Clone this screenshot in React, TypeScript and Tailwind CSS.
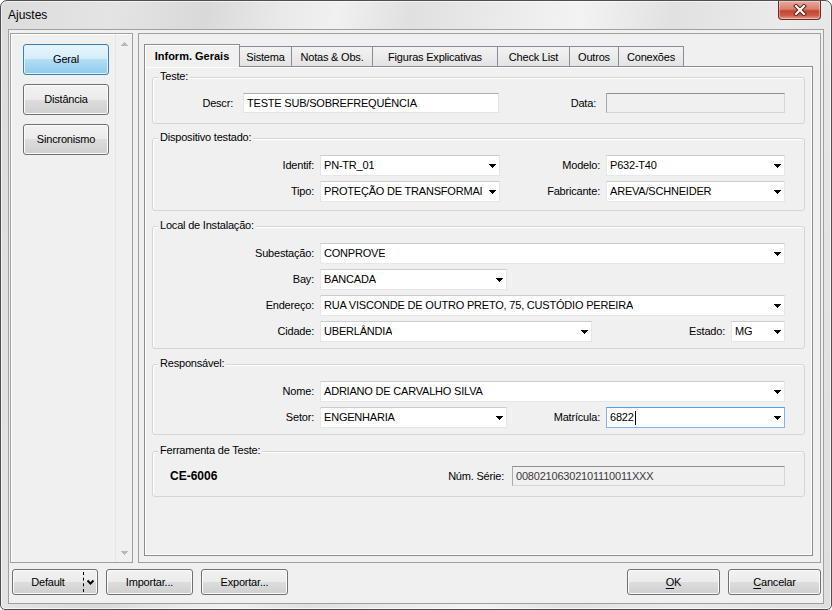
import React from "react";

function Arrow({ color = "#000" }: { color?: string }) {
  return (
    <svg width="7" height="4" viewBox="0 0 7 4" shapeRendering="crispEdges">
      <rect x="0" y="0" width="7" height="1" fill={color} />
      <rect x="1" y="1" width="5" height="1" fill={color} />
      <rect x="2" y="2" width="3" height="1" fill={color} />
      <rect x="3" y="3" width="1" height="1" fill={color} />
    </svg>
  );
}

function ArrowUp({ color = "#000" }: { color?: string }) {
  return (
    <svg width="7" height="4" viewBox="0 0 7 4" shapeRendering="crispEdges">
      <rect x="3" y="0" width="1" height="1" fill={color} />
      <rect x="2" y="1" width="3" height="1" fill={color} />
      <rect x="1" y="2" width="5" height="1" fill={color} />
      <rect x="0" y="3" width="7" height="1" fill={color} />
    </svg>
  );
}

function Combo({
  w,
  text,
  focused,
}: {
  w: string;
  text: string;
  focused?: boolean;
}) {
  return (
    <div
      className={`${w} h-[21px] relative flex items-center bg-white border ${
        focused
          ? "border-[#7eb4ea] border-t-[#569de5]"
          : "border-[#e3e6ea] border-t-[#c9ccd1]"
      }`}
    >
      <span className="pl-[3px] whitespace-nowrap overflow-hidden leading-[13px]">
        {text}
      </span>
      {focused && <span className="w-px h-[14px] bg-black ml-[1px]" />}
      <span className="absolute right-[3px] top-[8px] flex">
        <Arrow />
      </span>
    </div>
  );
}

function TextBox({ w, text }: { w: string; text: string }) {
  return (
    <div
      className={`${w} h-[20px] flex items-center bg-white border border-[#e2e3ea] border-t-[#abadb3]`}
    >
      <span className="pl-[3px] whitespace-nowrap leading-[13px]">{text}</span>
    </div>
  );
}

function Disabled({ w, text }: { w: string; text?: string }) {
  return (
    <div
      className={`${w} h-[20px] flex items-center bg-[#f0f0f0] border border-[#d5d5d5] border-t-[#8f8f8f] border-l-[#a9a9a9]`}
    >
      {text && (
        <span className="pl-[3px] whitespace-nowrap leading-[13px] text-[#3a3a3a]">
          {text}
        </span>
      )}
    </div>
  );
}

function Label({ w, text }: { w: string; text: string }) {
  return (
    <span className={`${w} shrink-0 text-right whitespace-nowrap leading-[13px]`}>
      {text}
    </span>
  );
}

function Group({
  label,
  className,
  children,
}: {
  label: string;
  className: string;
  children: React.ReactNode;
}) {
  return (
    <div
      className={`relative border border-[#d5d5d5] rounded-[3px] shadow-[inset_1px_1px_0_#ffffff] ${className}`}
    >
      <span className="absolute left-[5px] top-[-9px] px-[2px] bg-[#f0f0f0] leading-[14px] whitespace-nowrap">
        {label}
      </span>
      {children}
    </div>
  );
}

const btn =
  "border border-[#707070] rounded-[3px] bg-[linear-gradient(#f2f2f2_0%,#ebebeb_50%,#dddddd_50%,#cfcfcf_100%)] shadow-[inset_0_0_0_1px_#fbfbfb] flex items-center justify-center leading-[13px]";

function SideButton({ text, active }: { text: string; active?: boolean }) {
  return (
    <div
      className={`w-[86px] h-[31px] rounded-[3px] border flex items-center justify-center leading-[13px] ${
        active
          ? "border-[#3c7fb1] bg-[linear-gradient(#e8f5fc_0%,#d3edfa_50%,#b3def5_50%,#8fcbec_100%)] shadow-[inset_0_0_0_1px_#dff1fb]"
          : "border-[#707070] bg-[linear-gradient(#f2f2f2_0%,#ebebeb_50%,#dddddd_50%,#cfcfcf_100%)] shadow-[inset_0_0_0_1px_#fbfbfb]"
      }`}
    >
      {text}
    </div>
  );
}

function Tab({ w, text }: { w: string; text: string }) {
  return (
    <div
      className={`${w} h-[20px] border border-b-0 border-l-0 border-[#898c95] bg-[linear-gradient(#f3f3f3,#e3e3e3)] flex items-center justify-center leading-[13px] whitespace-nowrap pt-[1px]`}
    >
      {text}
    </div>
  );
}

export default function App() {
  return (
    <div className="w-[832px] h-[610px] bg-white font-['Liberation_Sans',Arial,sans-serif] text-[11px] tracking-[-0.2px] text-black">
      <div className="w-[832px] h-[610px] rounded-t-[7px] rounded-b-[5px] border border-[#4f4f4f] bg-[linear-gradient(100deg,#dcdcdc_0%,#e4e4e4_12%,#d9d9d9_22%,#e9e9e9_30%,#f1f1f1_36%,#e0e0e0_44%,#ececec_55%,#f3f3f3_62%,#e1e1e1_72%,#ebebeb_84%,#dedede_100%)] flex flex-col shadow-[inset_0_0_0_1px_rgba(255,255,255,0.6)]">
        {/* title bar */}
        <div className="h-[28px] flex justify-between shrink-0">
          <span className="pl-[7px] pt-[7px] text-[12px] tracking-normal leading-[15px]">Ajustes</span>
          <div className="mr-[10px] w-[43px] h-[19px] rounded-b-[4px] border border-t-0 border-[#6e2a20] bg-[linear-gradient(#e9a99b_0%,#d9806f_45%,#c44530_55%,#cc5a45_80%,#e3a08f_100%)] shadow-[inset_0_0_0_1px_rgba(255,255,255,0.35)] flex items-center justify-center">
            <svg width="14" height="12" viewBox="0 0 14 12">
              <path
                d="M3 2 L11 10 M11 2 L3 10"
                stroke="#5a1a12"
                strokeWidth="4"
                strokeLinecap="square"
              />
              <path
                d="M3 2 L11 10 M11 2 L3 10"
                stroke="#ffffff"
                strokeWidth="2.2"
                strokeLinecap="square"
              />
            </svg>
          </div>
        </div>

        {/* client area */}
        <div className="mx-[7px] h-[575px] border border-[#a0a0a0] bg-[#f0f0f0] flex flex-col shrink-0">
          <div className="flex pt-[3px] pl-[1px] gap-[5px] h-[533px]">
            {/* left panel */}
            <div className="w-[123px] h-[530px] border border-[#a0a0a0] shadow-[inset_1px_1px_0_#ffffff] flex">
              <div className="flex-1 pl-[12px] pt-[10px] flex flex-col gap-[9px]">
                <SideButton text="Geral" active />
                <SideButton text="Distância" />
                <SideButton text="Sincronismo" />
              </div>
              <div className="w-[17px] border-l border-[#e6e6e6] flex flex-col justify-between items-center pt-[8px] pb-[7px]">
                <ArrowUp color="#b8b8b8" />
                <Arrow color="#b8b8b8" />
              </div>
            </div>

            {/* right panel */}
            <div className="w-[683px] h-[530px] border border-[#a0a0a0] pl-[5px] pr-[7px] pt-[10px] flex flex-col">
              {/* tabs */}
              <div className="flex items-end h-[22px] relative z-10">
                <div className="w-[96px] h-[23px] -mb-[1px] border border-b-0 border-[#898c95] bg-[#f0f0f0] shadow-[inset_1px_1px_0_#ffffff] flex items-center justify-center font-bold tracking-normal leading-[13px] pt-[1px]">
                  Inform. Gerais
                </div>
                <Tab w="w-[52px]" text="Sistema" />
                <Tab w="w-[81px]" text="Notas & Obs." />
                <Tab w="w-[125px]" text="Figuras Explicativas" />
                <Tab w="w-[72px]" text="Check List" />
                <Tab w="w-[49px]" text="Outros" />
                <Tab w="w-[65px]" text="Conexões" />
              </div>
              {/* tab body */}
              <div className="w-[669px] h-[490px] border border-[#898c95] shadow-[inset_1px_1px_0_#ffffff,inset_-1px_-1px_0_#ffffff] px-[7px] pt-[10px] flex flex-col">
                <Group label="Teste:" className="h-[47px] pt-[15px]">
                  <div className="flex items-center">
                    <Label w="w-[80px]" text="Descr:" />
                    <div className="w-[10px]" />
                    <TextBox w="w-[256px]" text="TESTE SUB/SOBREFREQUÊNCIA" />
                    <Label w="w-[97px]" text="Data:" />
                    <div className="w-[10px]" />
                    <Disabled w="w-[179px]" />
                  </div>
                </Group>

                <Group label="Dispositivo testado:" className="mt-[14px] h-[73px] pt-[16px]">
                  <div className="flex flex-col gap-[5px]">
                    <div className="flex items-center">
                      <Label w="w-[161px]" text="Identif:" />
                      <div className="w-[6px]" />
                      <Combo w="w-[180px]" text="PN-TR_01" />
                      <Label w="w-[100px]" text="Modelo:" />
                      <div className="w-[6px]" />
                      <Combo w="w-[179px]" text="P632-T40" />
                    </div>
                    <div className="flex items-center">
                      <Label w="w-[161px]" text="Tipo:" />
                      <div className="w-[6px]" />
                      <Combo w="w-[180px]" text="PROTEÇÃO DE TRANSFORMAI" />
                      <Label w="w-[100px]" text="Fabricante:" />
                      <div className="w-[6px]" />
                      <Combo w="w-[179px]" text="AREVA/SCHNEIDER" />
                    </div>
                  </div>
                </Group>

                <Group label="Local de Instalação:" className="mt-[15px] h-[123px] pt-[16px]">
                  <div className="flex flex-col gap-[5px]">
                    <div className="flex items-center">
                      <Label w="w-[161px]" text="Subestação:" />
                      <div className="w-[6px]" />
                      <Combo w="w-[465px]" text="CONPROVE" />
                    </div>
                    <div className="flex items-center">
                      <Label w="w-[161px]" text="Bay:" />
                      <div className="w-[6px]" />
                      <Combo w="w-[187px]" text="BANCADA" />
                    </div>
                    <div className="flex items-center">
                      <Label w="w-[161px]" text="Endereço:" />
                      <div className="w-[6px]" />
                      <Combo w="w-[465px]" text="RUA VISCONDE DE OUTRO PRETO, 75, CUSTÓDIO PEREIRA" />
                    </div>
                    <div className="flex items-center">
                      <Label w="w-[161px]" text="Cidade:" />
                      <div className="w-[6px]" />
                      <Combo w="w-[272px]" text="UBERLÂNDIA" />
                      <Label w="w-[133px]" text="Estado:" />
                      <div className="w-[6px]" />
                      <Combo w="w-[54px]" text="MG" />
                    </div>
                  </div>
                </Group>

                <Group label="Responsável:" className="mt-[15px] h-[71px] pt-[16px]">
                  <div className="flex flex-col gap-[5px]">
                    <div className="flex items-center">
                      <Label w="w-[161px]" text="Nome:" />
                      <div className="w-[6px]" />
                      <Combo w="w-[465px]" text="ADRIANO DE CARVALHO SILVA" />
                    </div>
                    <div className="flex items-center">
                      <Label w="w-[161px]" text="Setor:" />
                      <div className="w-[6px]" />
                      <Combo w="w-[187px]" text="ENGENHARIA" />
                      <Label w="w-[93px]" text="Matrícula:" />
                      <div className="w-[6px]" />
                      <Combo w="w-[179px]" text="6822" focused />
                    </div>
                  </div>
                </Group>

                <Group label="Ferramenta de Teste:" className="mt-[16px] h-[46px] pt-[14px]">
                  <div className="flex items-center">
                    <div className="w-[351px] pl-[17px] flex items-center justify-between">
                      <span className="font-bold text-[12px] tracking-normal leading-[14px]">CE-6006</span>
                      <span className="leading-[13px]">Núm. Série:</span>
                    </div>
                    <div className="w-[8px]" />
                    <Disabled w="w-[273px]" text="00802106302101110011XXX" />
                  </div>
                </Group>
              </div>
            </div>
          </div>

          {/* bottom buttons */}
          <div className="flex items-center mt-[6px] pl-[3px] pr-[2px] h-[26px]">
            <div className={`${btn} w-[86px] h-[26px] justify-start`}>
              <span className="w-[70px] text-center">Default</span>
              <span className="h-[20px] border-l border-dashed border-black" />
              <span className="flex-1 flex justify-center">
                <svg width="9" height="7" viewBox="0 0 9 7">
                  <path d="M1.5 1.5 L4.5 4.5 L7.5 1.5" stroke="#000" strokeWidth="2" fill="none" />
                </svg>
              </span>
            </div>
            <div className="w-[8px]" />
            <div className={`${btn} w-[87px] h-[26px]`}>Importar...</div>
            <div className="w-[8px]" />
            <div className={`${btn} w-[87px] h-[26px]`}>Exportar...</div>
            <div className="flex-1" />
            <div className={`${btn} w-[93px] h-[26px]`}>
              <span>
                <span className="underline underline-offset-[2px]">O</span>K
              </span>
            </div>
            <div className="w-[8px]" />
            <div className={`${btn} w-[93px] h-[26px]`}>
              <span>
                <span className="underline underline-offset-[2px]">C</span>ancelar
              </span>
            </div>
          </div>
        </div>
      </div>
    </div>
  );
}
